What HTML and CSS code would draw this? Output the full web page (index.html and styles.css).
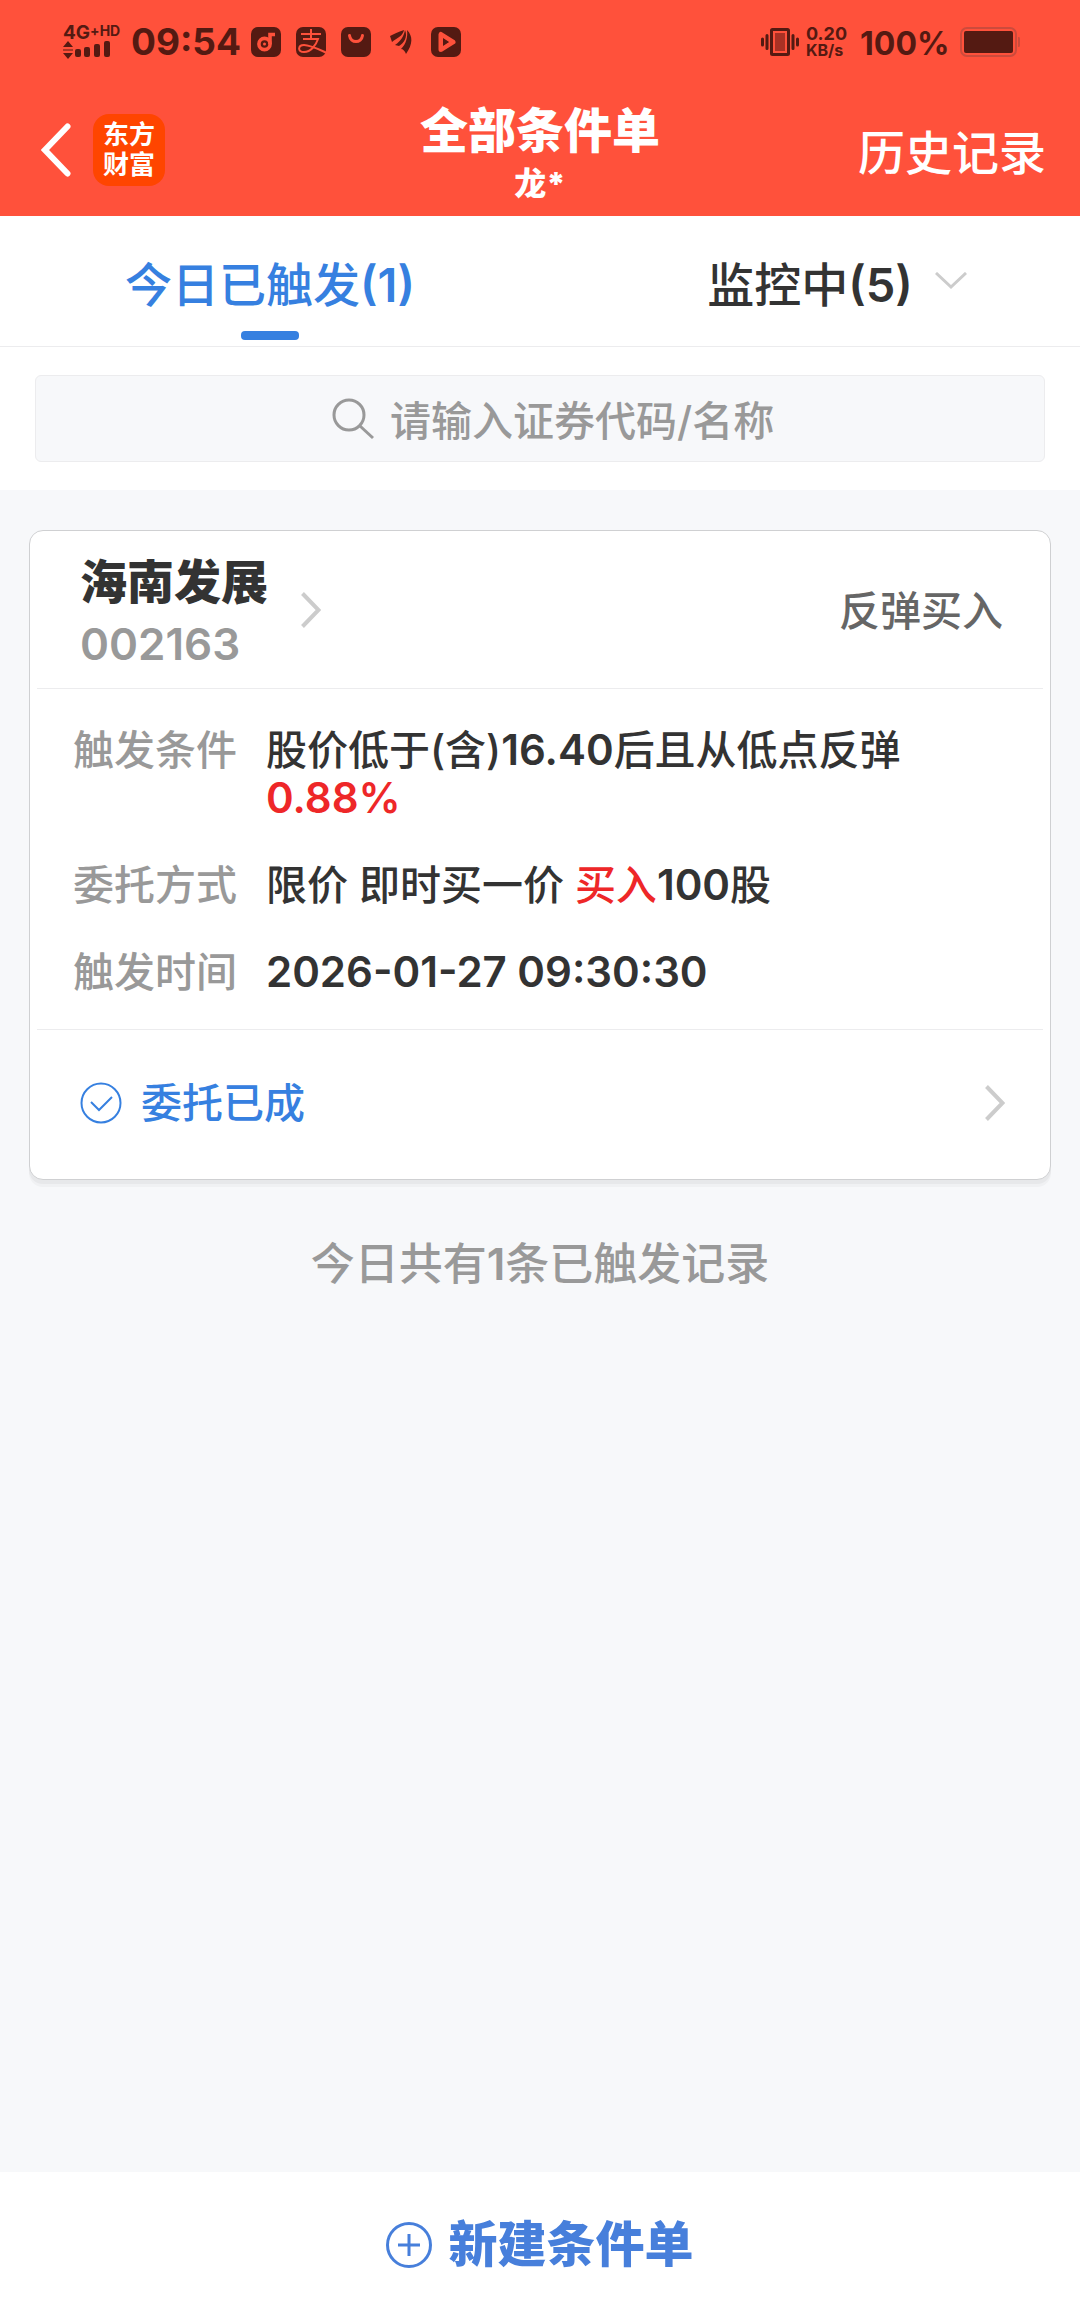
FILE: index.html
```html
<!DOCTYPE html>
<html lang="zh-CN">
<head>
<meta charset="utf-8">
<meta name="viewport" content="width=device-width, initial-scale=1">
<title>全部条件单</title>
<link rel="stylesheet" href="styles.css">
</head>
<body>
<div class="app">
  <header class="top">
    <div class="status">
      <div class="status-group">
        <div class="signal">
          <div class="network"><span class="network-gen">4G</span><span class="network-hd">+</span><span class="network-hd">HD</span></div>
          <svg class="signal-bars" viewBox="0 0 58 18" fill="currentColor" aria-hidden="true">
            <path d="M5 0l5 6H0zM5 18l5-6H0z"/>
            <path d="M0 8.500h10v1H0z"/>
            <rect x="12" y="8" width="6" height="8" rx="2"/>
            <rect x="21" y="6" width="6" height="10" rx="2"/>
            <rect x="31" y="3" width="6" height="13" rx="2"/>
            <rect x="41" y="0" width="6" height="16" rx="2"/>
          </svg>
        </div>
        <time class="clock">09:54</time>
        <div class="apps">
          <svg class="app-icon" viewBox="0 0 30 30" aria-hidden="true">
            <rect width="30" height="30" rx="7" fill="currentColor"/>
            <g fill="none" stroke="#ff513b" stroke-width="3.600"><circle cx="13.500" cy="17" r="5.600"/><path d="M19 17V7.500h5"/></g>
            <circle cx="13.500" cy="17" r="1.500" fill="#ff513b"/>
          </svg>
          <svg class="app-icon" viewBox="0 0 30 30" aria-hidden="true">
            <rect width="30" height="30" rx="7" fill="currentColor"/>
            <g fill="none" stroke="#ff513b" stroke-width="2"><path d="M5 7h20M15 2v10M7 12h15c-2 6-7 13-14 13-7 0-6-7 0-7 6 0 14 4 23 8"/></g>
          </svg>
          <svg class="app-icon" viewBox="0 0 30 30" aria-hidden="true">
            <rect width="30" height="30" rx="7" fill="currentColor"/>
            <path d="M8.500 8.500c1 8 12 8 13 0" fill="none" stroke="#ff513b" stroke-width="3" stroke-linecap="round"/>
          </svg>
          <svg class="app-icon" viewBox="0 0 30 30" fill="currentColor" aria-hidden="true">
            <path d="M4 9c4-2 8-4 14-6-1 6-7 8-12 12z"/>
            <path d="M9 18c6-4 9-9 10-15 3 7-1 13-6 16z"/>
            <path d="M15 22c5-5 7-12 6-19 6 6 6 14-1 24-1-3-3-5-5-5z"/>
          </svg>
          <svg class="app-icon" viewBox="0 0 30 30" aria-hidden="true">
            <rect width="30" height="30" rx="7" fill="currentColor"/>
            <path d="M10 7.500v15l12-7.500z" fill="none" stroke="#ff513b" stroke-width="5" stroke-linejoin="round"/>
            <path d="M12 11v8l6-4z" fill="currentColor"/>
          </svg>
        </div>
      </div>
      <div class="status-group">
        <svg class="vibrate" viewBox="0 0 38 28" aria-hidden="true">
          <rect x="10.500" y="1.500" width="17" height="25" rx="1" fill="none" stroke="currentColor" stroke-width="3"/>
          <rect x="14" y="5" width="10" height="18" fill="#a93124"/>
          <path d="M1.500 11v6M6 7.500v13M32 7.500v13M36.500 11v6" stroke="currentColor" stroke-width="3" stroke-linecap="round"/>
        </svg>
        <div class="speed"><span class="speed-value">0.20</span><span class="speed-unit">KB/s</span></div>
        <span class="percent">100%</span>
        <svg class="battery" viewBox="0 0 60 30" aria-hidden="true">
          <rect x="1" y="1" width="55" height="28" rx="6" fill="none" stroke="#cc4b3c" stroke-width="2"/>
          <rect x="4" y="4" width="49" height="22" rx="2" fill="#541a12"/>
          <path d="M58 10h1q1 0 1 2v6q0 2-1 2h-1z" fill="#cc4b3c"/>
        </svg>
      </div>
    </div>
    <div class="nav">
      <div class="nav-start">
        <button class="back" type="button" aria-label="返回">
          <svg class="back-icon" viewBox="0 0 30 54" fill="none" stroke="currentColor" stroke-width="6" stroke-linecap="round" aria-hidden="true"><path d="M26.500 3.500L4 27l22.500 23.500"/></svg>
        </button>
        <div class="logo"><span>东方</span><span>财富</span></div>
      </div>
      <div class="heading">
        <h1 class="title">全部条件单</h1>
        <p class="account">龙*</p>
      </div>
      <a class="history" href="#history">历史记录</a>
    </div>
  </header>

  <nav class="tabs">
    <a class="tab tab-active" href="#triggered"><span class="tab-label">今日已触发<span class="num">(1)</span></span></a>
    <a class="tab" href="#watching"><span class="tab-label">监控中<span class="num">(5)</span></span>
      <svg class="tab-arrow" viewBox="0 0 32 18" fill="none" stroke="currentColor" stroke-width="3" aria-hidden="true"><path d="M1 1l15 14L31 1"/></svg>
    </a>
  </nav>

  <div class="search">
    <label class="search-box">
      <svg class="search-icon" viewBox="0 0 42 42" fill="none" stroke="currentColor" stroke-width="3" aria-hidden="true"><circle cx="17" cy="17" r="15"/><path d="M28 28l13 12"/></svg>
      <input class="search-input" type="text" placeholder="请输入证券代码/名称" aria-label="请输入证券代码/名称">
    </label>
  </div>

  <main class="list">
    <article class="card">
      <div class="card-head">
        <a class="stock" href="#stock">
          <span class="stock-text"><span class="stock-name">海南发展</span><span class="stock-code num">002163</span></span>
          <svg class="arrow" viewBox="0 0 20 36" fill="none" stroke="currentColor" stroke-width="4" aria-hidden="true"><path d="M1.500 1.500L17.500 18l-16 16.500"/></svg>
        </a>
        <span class="kind">反弹买入</span>
      </div>
      <dl class="details">
        <dt>触发条件</dt>
        <dd>股价低于(含)<span class="num">16.40</span>后且从低点反弹<br><span class="red num">0.88%</span></dd>
        <dt>委托方式</dt>
        <dd>限价 即时买一价 <span class="red">买入</span><span class="num">100</span>股</dd>
        <dt>触发时间</dt>
        <dd class="num">2026-01-27 09:30:30</dd>
      </dl>
      <a class="result" href="#result">
        <svg class="check" viewBox="0 0 42 42" fill="none" stroke="currentColor" stroke-width="2" aria-hidden="true"><circle cx="21" cy="21" r="19.500"/><path d="M11 20l8 8 13-13"/></svg>
        <span class="result-text">委托已成</span>
        <svg class="arrow" viewBox="0 0 20 36" fill="none" stroke="currentColor" stroke-width="4" aria-hidden="true"><path d="M1.500 1.500L17.500 18l-16 16.500"/></svg>
      </a>
    </article>
    <p class="summary">今日共有<span class="num">1</span>条已触发记录</p>
  </main>

  <footer class="bottom">
    <button class="create" type="button">
      <svg class="plus" viewBox="0 0 46 46" fill="none" stroke="currentColor" stroke-width="3" aria-hidden="true"><circle cx="23" cy="23" r="21.500"/><path d="M23 12v22M12 23h22"/></svg>
      <span>新建条件单</span>
    </button>
  </footer>
</div>
</body>
</html>
```
FILE: styles.css
```css
* {
  box-sizing: border-box;
}

body {
  margin: 0;
  background: #f7f8fa;
  color: #333;
  font-family: Inter, "Noto Sans CJK SC", sans-serif;
  font-size: 41px;
  font-weight: 500;
  line-height: 48px;
}

h1, p, dl, dd {
  margin: 0;
}

a {
  color: inherit;
  text-decoration: none;
}

button {
  padding: 0;
  border: 0;
  background: none;
  color: inherit;
  font: inherit;
}

svg {
  display: block;
  flex: none;
}

.num {
  font-weight: 600;
}

.app {
  display: flex;
  flex-direction: column;
  min-height: 100vh;
}

.top {
  background: #ff513b;
  color: #fff;
}

/* Status bar */
.status {
  display: flex;
  justify-content: space-between;
  align-items: center;
  height: 84px;
  padding: 0 60px 0 63px;
  color: #541a12;
  font-weight: 700;
}

.status-group {
  display: flex;
  align-items: center;
}

.signal {
  display: flex;
  flex-direction: column;
  width: 68px;
}

.network {
  display: flex;
  line-height: 16px;
}

.network-gen {
  font-size: 19px;
}

.network-hd {
  font-size: 14px;
  line-height: 12px;
}

.signal-bars {
  width: 58px;
  height: 18px;
}

.clock {
  width: 120px;
  font-size: 37px;
}

.apps {
  display: flex;
  gap: 15px;
}

.app-icon {
  width: 30px;
  height: 30px;
}

.vibrate {
  width: 38px;
  height: 28px;
  margin-right: 7px;
}

.speed {
  display: flex;
  flex-direction: column;
  width: 54px;
  line-height: 16px;
}

.speed-value {
  font-size: 18px;
}

.speed-unit {
  font-size: 16px;
}

.percent {
  width: 100px;
  padding-top: 3px;
  font-size: 32px;
}

.battery {
  width: 60px;
  height: 30px;
}

/* Title bar */
.nav {
  display: grid;
  grid-template-columns: 1fr auto 1fr;
  align-items: center;
  height: 132px;
  padding: 0 34px;
}

.nav-start {
  display: flex;
  align-items: center;
  gap: 22px;
  padding-left: 7px;
}

.back-icon {
  width: 30px;
  height: 54px;
}

.logo {
  display: flex;
  flex-direction: column;
  justify-content: center;
  align-items: center;
  width: 72px;
  height: 72px;
  border-radius: 16px;
  background: #ff4500;
  font-size: 26px;
  font-weight: 700;
  line-height: 30px;
}

.heading {
  padding-top: 10px;
  text-align: center;
}

.title {
  font-size: 48px;
  font-weight: 900;
  line-height: 58px;
}

.account {
  font-size: 32px;
  font-weight: 900;
  line-height: 48px;
}

.history {
  justify-self: end;
  padding-top: 6px;
  font-size: 47px;
}

/* Tabs */
.tabs {
  display: flex;
  height: 131px;
  border-bottom: 1px solid #ececee;
  background: #fff;
}

.tab {
  position: relative;
  display: grid;
  flex: 1;
  grid-template-columns: 1fr auto 1fr;
  align-items: center;
  column-gap: 22px;
  font-size: 47px;
}

.tab-label {
  grid-column: 2;
  padding-top: 7px;
}

.tab-active {
  color: #3680e0;
}

.tab-active::after {
  content: "";
  position: absolute;
  bottom: 6px;
  left: 50%;
  width: 58px;
  height: 9px;
  margin-left: -29px;
  border-radius: 4px;
  background: currentColor;
}

.tab-arrow {
  width: 32px;
  height: 18px;
  color: #ccc;
}

/* Search */
.search {
  padding: 28px 35px;
  background: #fff;
}

.search-box {
  display: flex;
  justify-content: center;
  align-items: center;
  gap: 16px;
  height: 87px;
  padding-left: 52px;
  border: 1px solid #ececee;
  border-radius: 6px;
  background: #f7f8fa;
  color: #999;
}

.search-icon {
  width: 42px;
  height: 42px;
}

.search-input {
  width: 410px;
  padding: 4px 0 0;
  border: 0;
  outline: 0;
  background: none;
  color: #333;
  font: inherit;
}

.search-input::placeholder {
  color: #999;
  opacity: 1;
}

/* Order card */
.list {
  flex: 1;
  padding: 40px 29px;
}

.card {
  padding: 0 7px;
  border: 1px solid #cfd0d2;
  border-radius: 14px;
  background: #fff;
  box-shadow: 0 4px 0 #e7e8ea, 0 7px 0 #f0f1f3;
}

.card-head {
  display: flex;
  justify-content: space-between;
  align-items: center;
  height: 158px;
  padding: 0 40px 0 43px;
  border-bottom: 1px solid #ececee;
}

.stock {
  display: flex;
  align-items: center;
  gap: 33px;
}

.stock-text {
  display: flex;
  flex-direction: column;
  padding-top: 6px;
  line-height: 62px;
}

.stock-name {
  font-size: 47px;
  font-weight: 900;
}

.stock-code {
  color: #999;
  font-size: 44px;
}

.arrow {
  width: 20px;
  height: 36px;
  color: #ccc;
}

.kind {
  padding-top: 2px;
  color: #666;
}

.details {
  display: grid;
  grid-template-columns: auto 1fr;
  gap: 39px 29px;
  padding: 37px 37px 33px 36px;
  border-bottom: 1px solid #ececee;
}

.details dt {
  color: #999;
}

.details .num {
  font-size: 42px;
}

.red {
  color: #ee2728;
}

.result {
  display: flex;
  align-items: center;
  gap: 19px;
  height: 149px;
  padding: 0 38px 4px 43px;
  color: #3680e0;
}

.result-text {
  flex: 1;
}

.check {
  width: 42px;
  height: 42px;
}

.summary {
  margin-top: 60px;
  color: #999;
  font-size: 44px;
  text-align: center;
}

/* Bottom bar */
.bottom {
  display: flex;
  justify-content: center;
  height: 144px;
  background: #fff;
  color: #477fdb;
}

.create {
  display: flex;
  align-items: center;
  gap: 16px;
  padding-top: 2px;
  font-size: 49px;
  font-weight: 900;
}

.plus {
  width: 46px;
  height: 46px;
}
```
